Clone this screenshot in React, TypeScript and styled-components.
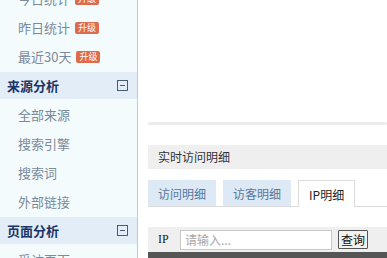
import React from "react";
import styled, { createGlobalStyle } from "styled-components";

const Global = createGlobalStyle`
  html, body { margin: 0; padding: 0; background: #fff; }
  body {
    font-family: "Microsoft YaHei", "Noto Sans CJK SC", "Liberation Sans", sans-serif;
    width: 387px;
    height: 258px;
    overflow: hidden;
  }
`;

const Page = styled.div`
  display: flex;
  width: 387px;
  height: 258px;
  overflow: hidden;
`;

const Sidebar = styled.aside`
  width: 137px;
  flex-shrink: 0;
  background: #f4fbfd;
  border-right: 1px solid #c4c8cc;
  overflow: hidden;
`;

const NavList = styled.ul`
  list-style: none;
  margin: -16px 0 0;
  padding: 0;
`;

const NavItem = styled.li`
  height: 29px;
  display: flex;
  align-items: center;
  padding-left: 18px;
  font-size: 13px;
  color: #7a8a99;
`;

const NavHeader = styled.li`
  height: 27px;
  margin: 1px 0;
  display: flex;
  align-items: center;
  justify-content: space-between;
  padding: 0 9px 0 7px;
  background: #e3edf8;
  font-size: 13px;
  font-weight: bold;
  color: #1a3566;
`;

const Badge = styled.span`
  display: inline-block;
  margin-left: 5px;
  padding: 0 3px;
  height: 12px;
  line-height: 12px;
  font-size: 9px;
  color: #fff;
  background: #de6b4c;
  border-radius: 2px;
`;

const Main = styled.main`
  flex: 1;
  padding-left: 10px;
  display: flex;
  flex-direction: column;
  background: #fff;
`;

const Scroll = styled.div`
  margin-top: 122px;
  height: 3px;
  background: #ececec;
  border-radius: 2px;
`;

const TitleBar = styled.div`
  margin-top: 20px;
  height: 25px;
  display: flex;
  align-items: center;
  padding-left: 10px;
  background: #efefef;
  font-size: 12px;
  color: #333;
`;

const Tabs = styled.div`
  margin-top: 11px;
  display: flex;
  align-items: flex-end;
  border-bottom: 1px solid #dcdcdc;
  height: 26px;
`;

const Tab = styled.div<{ $active?: boolean }>`
  display: flex;
  align-items: center;
  margin-right: ${(p) => (p.$active ? 0 : 7)}px;
  font-size: 12px;
  color: ${(p) => (p.$active ? "#222" : "#56789c")};
  background: ${(p) => (p.$active ? "#fff" : "#dde9f5")};
  border: 1px solid ${(p) => (p.$active ? "#dcdcdc" : "#dde9f5")};
  border-bottom: none;
  margin-bottom: ${(p) => (p.$active ? -1 : 0)}px;
  height: ${(p) => (p.$active ? 26 : 25)}px;
  padding: 0 ${(p) => (p.$active ? 10 : 9)}px;
`;

const SearchRow = styled.div`
  margin-top: 20px;
  height: 26px;
  display: flex;
  align-items: center;
  padding-left: 10px;
  background: #efefef;
  font-size: 12px;
  color: #222;
`;

const Label = styled.span`
  font-family: "Liberation Serif", serif;
  font-size: 12px;
  width: 22px;
`;

const Input = styled.input`
  width: 152px;
  height: 20px;
  box-sizing: border-box;
  border: 1px solid #c8c8c8;
  padding: 0 4px;
  font-size: 12px;
  font-family: inherit;
  outline: none;
  &::placeholder { color: #a8a8a8; }
`;

const Button = styled.button`
  margin-left: 6px;
  height: 19px;
  padding: 0 2px;
  font-size: 12px;
  font-family: inherit;
  color: #111;
  background: #f2f2f2;
  border: 1px solid #555;
  border-radius: 1px;
  line-height: 15px;
`;

const Footer = styled.div`
  height: 6px;
  background: #555;
`;

const Collapse = () => (
  <svg width="11" height="11" viewBox="0 0 11 11">
    <rect x="0.5" y="0.5" width="10" height="10" fill="none" stroke="#3a4d66" strokeWidth="0.9" />
    <line x1="3" y1="5.5" x2="8" y2="5.5" stroke="#3a4d66" strokeWidth="0.9" />
  </svg>
);

export default function App() {
  return (
    <Page>
      <Global />
      <Sidebar>
        <NavList>
          <NavItem>今日统计<Badge>升级</Badge></NavItem>
          <NavItem>昨日统计<Badge>升级</Badge></NavItem>
          <NavItem>最近30天<Badge>升级</Badge></NavItem>
          <NavHeader>来源分析<Collapse /></NavHeader>
          <NavItem>全部来源</NavItem>
          <NavItem>搜索引擎</NavItem>
          <NavItem>搜索词</NavItem>
          <NavItem>外部链接</NavItem>
          <NavHeader>页面分析<Collapse /></NavHeader>
          <NavItem>受访页面</NavItem>
        </NavList>
      </Sidebar>
      <Main>
        <Scroll />
        <TitleBar>实时访问明细</TitleBar>
        <Tabs>
          <Tab>访问明细</Tab>
          <Tab>访客明细</Tab>
          <Tab $active>IP明细</Tab>
        </Tabs>
        <SearchRow>
          <Label>IP</Label>
          <Input placeholder="请输入..." />
          <Button>查询</Button>
        </SearchRow>
        <Footer />
      </Main>
    </Page>
  );
}
